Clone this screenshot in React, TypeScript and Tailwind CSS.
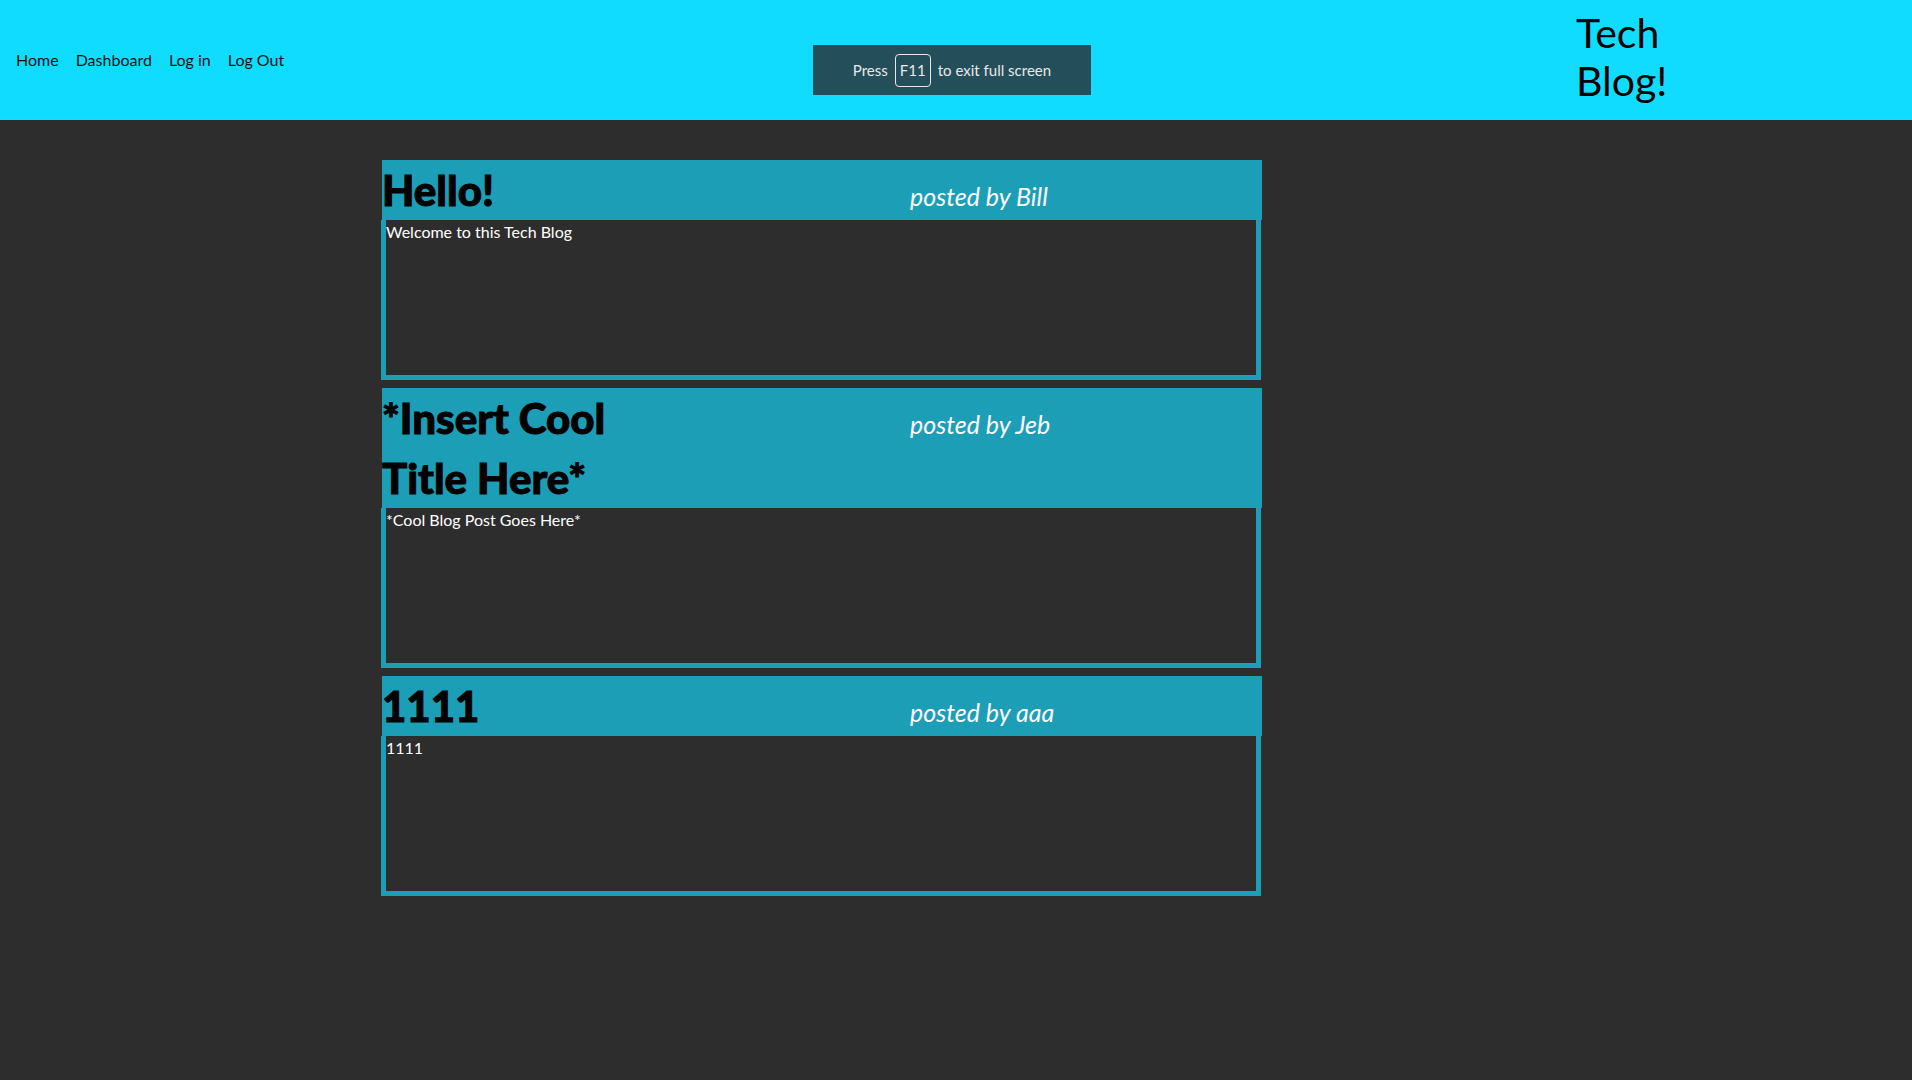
const posts = [
  { title: 'Hello!', author: 'Bill', body: 'Welcome to this Tech Blog' },
  { title: '*Insert Cool Title Here*', author: 'Jeb', body: '*Cool Blog Post Goes Here*' },
  { title: '1111', author: 'aaa', body: '1111' },
];

function PostCard({ title, author, body }: { title: string; author: string; body: string }) {
  return (
    <div className="flex flex-col">
      <div className="flex items-baseline bg-[#1c9eb7]">
        <div className="w-[528px] shrink-0">
          <h2 className="max-w-[300px] text-[42px] leading-[60px] font-black text-black [-webkit-text-stroke:1px_black]">
            {title}
          </h2>
        </div>
        <p className="text-[25px] italic text-white">posted by {author}</p>
      </div>
      <div className="-ml-px h-[160px] w-[880px] border-[5px] border-t-0 border-[#1c9eb7] pt-[2px] text-[16px] leading-[19px] text-white">
        {body}
      </div>
    </div>
  );
}

export default function App() {
  return (
    <div className="relative min-h-screen bg-[#2d2d2d] font-['Lato',sans-serif]">
      <header className="flex h-[120px] items-center bg-[#10dcff]">
        <nav className="flex gap-[17px] pl-[16px] text-[16px] text-[#111]">
          <a href="#">Home</a>
          <a href="#">Dashboard</a>
          <a href="#">Log in</a>
          <a href="#">Log Out</a>
        </nav>
        <div className="ml-auto w-[336px] self-start pt-[9px]">
          <h1 className="w-[150px] text-[41px] leading-[48px] text-black">Tech Blog!</h1>
        </div>
      </header>

      <main className="ml-[382px] flex w-[880px] flex-col gap-[8px] pt-[40px]">
        {posts.map((p) => (
          <PostCard key={p.title} {...p} />
        ))}
      </main>

      <div className="absolute left-[813px] top-[45px] flex h-[50px] w-[278px] items-center justify-center gap-[7px] bg-[#244e5a] text-[15px] text-[#e8e8e8]">
        <span>Press</span>
        <span className="flex h-[33px] w-[36px] items-center justify-center rounded-[4px] border border-[#e8e8e8]">F11</span>
        <span>to exit full screen</span>
      </div>
    </div>
  );
}
